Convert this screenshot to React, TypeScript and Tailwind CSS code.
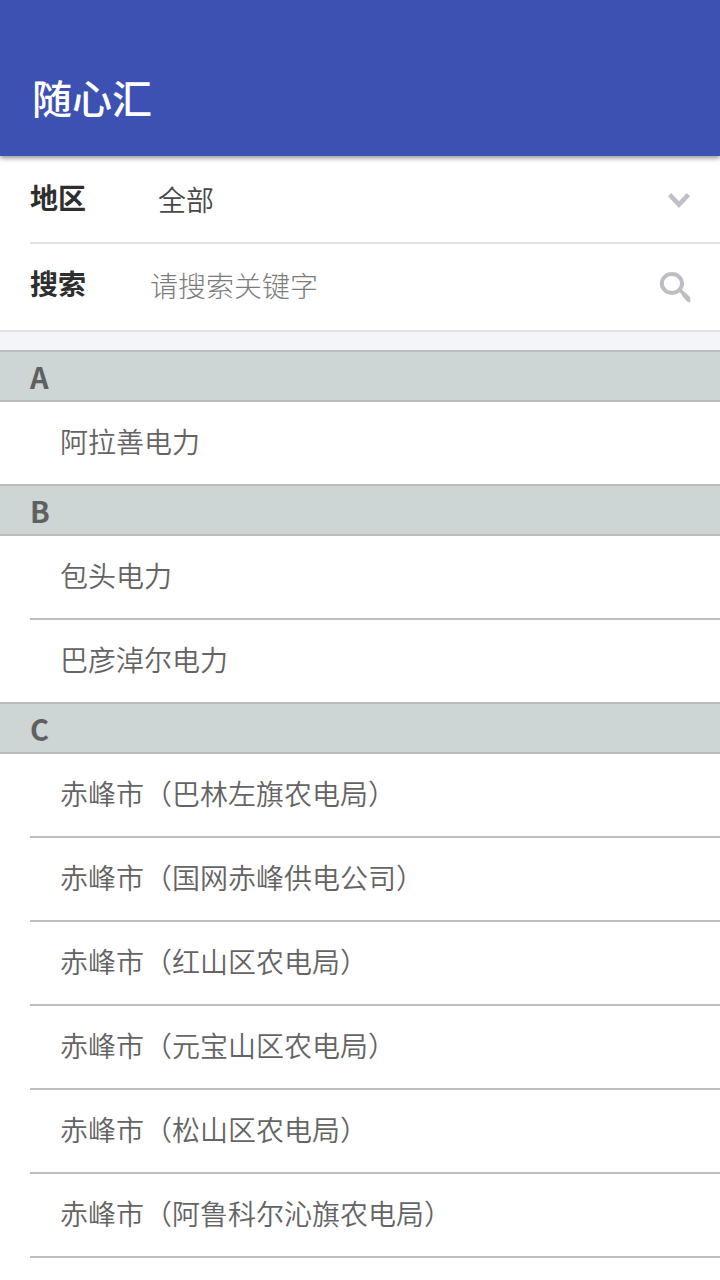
const groups = [
  { letter: 'A', items: ['阿拉善电力'] },
  { letter: 'B', items: ['包头电力', '巴彦淖尔电力'] },
  {
    letter: 'C',
    items: [
      '赤峰市（巴林左旗农电局）',
      '赤峰市（国网赤峰供电公司）',
      '赤峰市（红山区农电局）',
      '赤峰市（元宝山区农电局）',
      '赤峰市（松山区农电局）',
      '赤峰市（阿鲁科尔沁旗农电局）',
      '',
    ],
  },
];

const ChevronIcon = () => (
  <svg className="mr-[29px] h-6 w-6" viewBox="0 0 24 24" fill="none" stroke="#c0c1c6" strokeWidth="4.6">
    <path d="M2.6 7.7 12 17.6 21.4 7.7" />
  </svg>
);

const SearchIcon = () => (
  <svg className="mr-[29px] h-8 w-8" viewBox="0 0 32 32" fill="none" stroke="#bdbec3">
    <ellipse cx="12.9" cy="12.5" rx="10.1" ry="9.4" strokeWidth="4" />
    <path d="M20 18.3 24.2 22.4" strokeWidth="3.4" />
    <path d="M23 20.2Q24.5 20.2 27 22.4L31 26.3V31.3Q28.5 31 26.5 28.6L24 25.4Q22.6 23.8 22.5 22Z" fill="#bdbec3" strokeWidth="0.5" />
  </svg>
);

const App = () => {
  return (
    <div className="flex h-[1280px] w-[720px] flex-col overflow-hidden bg-white font-['Noto_Sans_CJK_SC',sans-serif]">
      <header className="z-10 flex h-[156px] shrink-0 items-end bg-[#3d51b3] px-8 pb-[29px] shadow-[0_2px_5px_rgba(0,0,0,0.45)]">
        <h1 className="text-[40px] leading-[60px] font-medium text-white">随心汇</h1>
      </header>

      {/* Filters */}
      <div className="shrink-0 border-b-2 border-[#e2e2e2]">
        <div className="ml-[30px] flex h-[88px] items-center border-b-2 border-[#e2e2e2] text-[28px] leading-10">
          <span className="w-32 pb-1 font-bold text-[#2e2e2e]">地区</span>
          <span className="flex-1 pb-px font-[350] text-[#484848]">全部</span>
          <ChevronIcon />
        </div>
        <div className="ml-[30px] flex h-[86px] items-center text-[28px] leading-10">
          <span className="w-[120px] pb-2 font-bold text-[#2e2e2e]">搜索</span>
          <input
            className="min-w-0 flex-1 pb-1 font-light outline-none placeholder:text-[#7c7c7c]"
            placeholder="请搜索关键字"
          />
          <SearchIcon />
        </div>
      </div>
      <div className="h-[18px] shrink-0 bg-[#f3f5f9]" />

      {/* Companies by first letter */}
      {groups.map(({ letter, items }) => (
        <section key={letter} className="shrink-0">
          <h2 className="flex h-[52px] items-center border-y-2 border-[#bbbdbd] bg-[#ced5d5] pl-[30px] text-[29px] leading-10 font-bold text-[#606060]">
            {letter}
          </h2>
          <ul className="ml-[30px] divide-y-2 divide-[#bdbdbd]">
            {items.map((name, i) => (
              <li
                key={i}
                className="box-content flex h-[82px] items-center pl-[30px] text-[28px] leading-10 font-[350] text-[#646464]"
              >
                <span className="pb-1">{name}</span>
              </li>
            ))}
          </ul>
        </section>
      ))}
    </div>
  );
};

export default App;
